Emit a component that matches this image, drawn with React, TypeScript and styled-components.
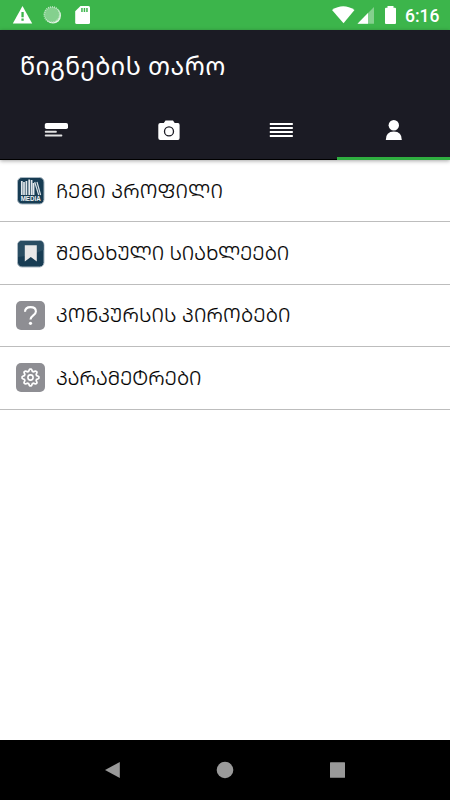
import React from "react";
import styled, { createGlobalStyle } from "styled-components";

const GlobalStyle = createGlobalStyle`
  * { box-sizing: border-box; }
  html, body { margin: 0; padding: 0; background: #fff; }
  body { font-family: "Noto Sans", "Noto Sans Georgian", "DejaVu Sans", sans-serif; }
  svg { display: block; flex: none; }
`;

const Screen = styled.div`
  width: 450px;
  height: 800px;
  display: flex;
  flex-direction: column;
  background: #fff;
  overflow: hidden;
`;

const StatusBar = styled.header`
  height: 30px;
  flex: none;
  display: flex;
  justify-content: space-between;
  background: #3cb54b;
`;

const Clock = styled.time`
  width: 50px;
  padding-left: 5px;
  font: 500 17.5px/32px Roboto, sans-serif;
  color: #fff;
  white-space: nowrap;
`;

const StatusGroup = styled.div`
  display: flex;
`;

const AppBar = styled.div`
  height: 130px;
  flex: none;
  display: flex;
  flex-direction: column;
  background: #1b1b24;
  box-shadow: 0 1px 4px rgba(0, 0, 0, 0.35);
  z-index: 1;
`;

const Title = styled.h1`
  height: 70px;
  margin: 0;
  padding-left: 20px;
  font-size: 25px;
  font-weight: 400;
  letter-spacing: 0.42px;
  line-height: 70px;
  color: #fff;
  white-space: nowrap;
`;

const Tabs = styled.nav`
  height: 60px;
  display: grid;
  grid-template-columns: 112.5px 112.5px 112px 1fr;
`;

const Tab = styled.button<{ $active?: boolean }>`
  display: flex;
  justify-content: center;
  padding: 17px 0 0;
  border: 0;
  border-bottom: ${(p) => (p.$active ? "3px solid #2fae40" : "1px solid #000")};
  background: transparent;
`;

const List = styled.main`
  flex: 1;
`;

const Row = styled.div`
  height: 62.4px;
  display: flex;
  align-items: center;
  gap: 11px;
  padding-left: 16px;
  border-bottom: 1px solid #bdbdbd;
`;

const Label = styled.span<{ $spacing: number }>`
  padding-bottom: 1px;
  font-size: 20px;
  font-weight: 300;
  letter-spacing: ${(p) => p.$spacing}px;
  color: #000;
  -webkit-text-stroke: 0.2px #000;
  white-space: nowrap;
`;

const NavBar = styled.footer`
  height: 60px;
  flex: none;
  display: grid;
  grid-template-columns: repeat(3, 112.5px);
  justify-content: center;
  justify-items: center;
  align-items: center;
  background: #000;
`;

const Notifications = () => (
  <svg width="100" height="30">
    <path d="M22.5 6 32.2 23.6H12.8Z" fill="#fff" />
    <path d="M21.4 12h2.3v5.2h-2.3zM21.4 18.6h2.3v2.2h-2.3z" fill="#3cb54b" />
    <circle cx="53" cy="15.6" r="8" fill="#e4f5e6" />
    <circle cx="52" cy="14.6" r="7.7" fill="#84d08e" />
    <circle cx="52" cy="14.6" r="7.7" fill="none" stroke="#c2e8c7" strokeWidth="1.6" strokeDasharray="1 1" />
    <path d="M80.5 6H88.5q1.500 0 1.500 1.500V22.500q0 1.500-1.500 1.500H76.700q-1.500 0-1.500-1.500V11.300Z" fill="#fff" />
    <path d="M81.200 8h1.500v4h-1.500zM83.700 8h1.500v4h-1.500zM86.200 8h1.500v4h-1.500z" fill="#3cb54b" />
  </svg>
);

const Signals = () => (
  <svg width="69" height="30" viewBox="1 0 69 30">
    <path d="M2 10Q13.200 2.500 24.500 10L13.500 23.200Z" fill="#fff" />
    <path d="M27.500 23.700 44 7V23.700Z" fill="#84d08e" />
    <path d="M27.500 23.700 38 13V23.700Z" fill="#fff" />
    <path d="M58 6v1.800h-1.500q-1 0-1 1V23q0 1 1 1h9q1 0 1-1V8.800q0-1-1-1H64V6Z" transform="translate(-.5 0)" fill="#fff" />
  </svg>
);

const FeedIcon = () => (
  <svg width="24" height="24">
    <rect x=".8" y="6" width="23.200" height="6" rx="1.800" fill="#fff" />
    <rect x=".8" y="13.800" width="12" height="1.900" rx=".8" fill="#e2e2e2" />
    <rect x=".8" y="17.500" width="17.500" height="2.100" rx=".8" fill="#e2e2e2" />
  </svg>
);

const CameraIcon = () => (
  <svg width="24" height="24">
    <path d="M8.500 3.500h7.500l1.700 2.500H21q1.600 0 1.600 2V21q0 2-1.600 2H3.300q-2 0-2-2V8q0-2 2-2H6.800Z" fill="#fff" />
    <circle cx="12" cy="14.400" r="4.500" fill="none" stroke="#1b1b24" strokeWidth="1.300" />
  </svg>
);

const LinesIcon = () => (
  <svg width="24" height="24">
    <path d="M.8 7h23M.8 11h23M.8 15h23M.8 19h23" stroke="#fff" strokeWidth="2" />
  </svg>
);

const PersonIcon = () => (
  <svg width="24" height="24">
    <circle cx="11.800" cy="8.300" r="5.200" fill="#fff" />
    <path d="M3.800 23Q3.800 14.500 11.800 14.500T19.800 23Z" fill="#fff" />
  </svg>
);

const BooksIcon = () => (
  <svg width="29" height="29" viewBox="0 0 29 29">
    <rect x="1.500" y="1.500" width="26.500" height="26.500" rx="4.500" fill="#173c53" stroke="#aab8c2" />
    <path d="M5.800 5v14M8 6v13M10.400 5v14M13.200 3.500v15.500M15.600 4v15M17.600 7v12" stroke="#e2e8ec" strokeWidth="1.700" />
    <path d="m18.700 6 4 13M21 6l3.600 13" stroke="#d8e0e5" strokeWidth="1.200" />
    <text x="14.700" y="25.200" textAnchor="middle" fontFamily="Liberation Sans, sans-serif" fontWeight="700" fontSize="7" textLength="20" lengthAdjust="spacingAndGlyphs" fill="#f0f4f6">MEDIA</text>
  </svg>
);

const BookmarkIcon = () => (
  <svg width="29" height="29" viewBox="0 0 29 29">
    <rect x="1.500" y="1.500" width="26.500" height="26.500" rx="4.500" fill="#173c53" stroke="#aab8c2" />
    <path d="M2 6q0-4 4-4h17.500q4 0 4 4v5Q15 17 2 18Z" fill="#294d62" />
    <path d="M8.800 6.200h12v16.200l-6-4.500-6 4.500Z" fill="#e8e8e8" />
  </svg>
);

const QuestionIcon = () => (
  <svg width="29" height="29" viewBox="0 0 29 29">
    <rect width="29" height="29" rx="5" fill="#8e8e93" />
    <path d="M9 10.800c.1-3 2.200-4.700 5.500-4.700 3.200 0 5.400 1.700 5.400 4.300 0 4-5.400 4-5.400 8.200" fill="none" stroke="#fff" strokeWidth="2.100" />
    <circle cx="14.500" cy="22.300" r="1.600" fill="#fff" />
  </svg>
);

const teeth = Array.from({ length: 65 }, (_, i) => {
  const a = (i / 64) * Math.PI * 2;
  const r = 7.4 + Math.max(-1, Math.min(1, Math.cos(a * 8) * 1.6)) * 1.0;
  return `${14.5 + r * Math.sin(a)},${14.5 - r * Math.cos(a)}`;
}).join(" ");

const GearIcon = () => (
  <svg width="29" height="29" viewBox="0 0 29 29">
    <rect width="29" height="29" rx="5" fill="#8e8e93" />
    <polygon points={teeth} fill="none" stroke="#fff" strokeWidth="1.700" strokeLinejoin="round" />
    <circle cx="14.500" cy="14.500" r="2.600" fill="none" stroke="#fff" strokeWidth="1.600" />
  </svg>
);

const items = [
  { label: "ᲩᲔᲛᲘ ᲞᲠᲝᲤᲘᲚᲘ", Icon: BooksIcon, spacing: 0.18 },
  { label: "ᲨᲔᲜᲐᲮᲣᲚᲘ ᲡᲘᲐᲮᲚᲔᲔᲑᲘ", Icon: BookmarkIcon, spacing: 0.05 },
  { label: "ᲙᲝᲜᲙᲣᲠᲡᲘᲡ ᲞᲘᲠᲝᲑᲔᲑᲘ", Icon: QuestionIcon, spacing: 0.18 },
  { label: "ᲞᲐᲠᲐᲛᲔᲢᲠᲔᲑᲘ", Icon: GearIcon, spacing: 0 },
];

export default function App() {
  return (
    <Screen>
      <GlobalStyle />
      <StatusBar>
        <Notifications />
        <StatusGroup>
          <Signals />
          <Clock>6:16</Clock>
        </StatusGroup>
      </StatusBar>
      <AppBar>
        <Title>წიგნების თარო</Title>
        <Tabs>
          <Tab><FeedIcon /></Tab>
          <Tab><CameraIcon /></Tab>
          <Tab><LinesIcon /></Tab>
          <Tab $active><PersonIcon /></Tab>
        </Tabs>
      </AppBar>
      <List>
        {items.map(({ label, Icon, spacing }) => (
          <Row key={label}>
            <Icon />
            <Label $spacing={spacing}>{label}</Label>
          </Row>
        ))}
      </List>
      <NavBar>
        <svg width="16" height="18"><path d="M0 9 14.800 1V17Z" fill="#999" /></svg>
        <svg width="18" height="18"><circle cx="9" cy="9" r="8.300" fill="#999" /></svg>
        <svg width="16" height="16"><rect x="0" y=".3" width="15" height="15.500" rx=".5" fill="#999" /></svg>
      </NavBar>
    </Screen>
  );
}
